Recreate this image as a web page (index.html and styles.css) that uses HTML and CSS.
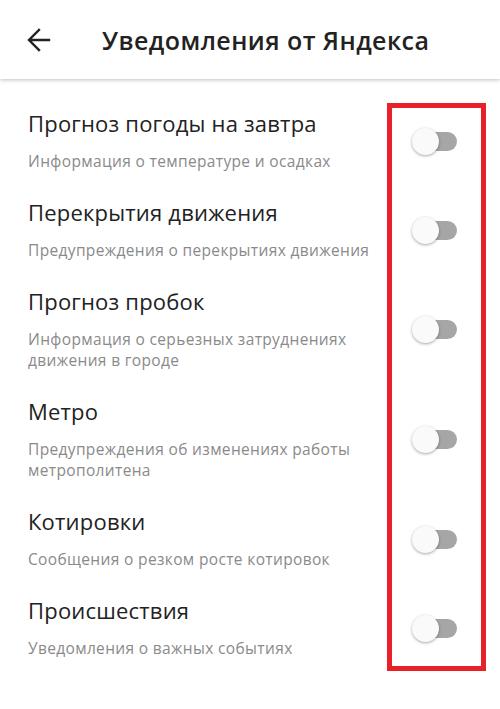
FILE: index.html
```html
<!DOCTYPE html>
<html lang="ru">
<head>
<meta charset="utf-8">
<title>Уведомления от Яндекса</title>
<link rel="stylesheet" href="styles.css">
</head>
<body>
<header class="appbar">
  <svg class="back" width="24" height="24" viewBox="0 0 24 24" aria-hidden="true">
    <path d="M22 12H3M12 2L2 12l10 10" fill="none" stroke="#222" stroke-width="2.4" stroke-linecap="square"/>
  </svg>
  <h1 class="title">Уведомления от Яндекса</h1>
</header>
<main class="list">
  <div class="row">
    <div class="text"><div class="name">Прогноз погоды на завтра</div><div class="desc">Информация о температуре и осадках</div></div>
    <span class="switch"><span class="track"></span><span class="knob"></span></span>
  </div>
  <div class="row">
    <div class="text"><div class="name">Перекрытия движения</div><div class="desc">Предупреждения о перекрытиях движения</div></div>
    <span class="switch"><span class="track"></span><span class="knob"></span></span>
  </div>
  <div class="row">
    <div class="text"><div class="name">Прогноз пробок</div><div class="desc">Информация о серьезных затруднениях движения в городе</div></div>
    <span class="switch"><span class="track"></span><span class="knob"></span></span>
  </div>
  <div class="row">
    <div class="text"><div class="name">Метро</div><div class="desc">Предупреждения об изменениях работы метрополитена</div></div>
    <span class="switch"><span class="track"></span><span class="knob"></span></span>
  </div>
  <div class="row">
    <div class="text"><div class="name">Котировки</div><div class="desc">Сообщения о резком росте котировок</div></div>
    <span class="switch"><span class="track"></span><span class="knob"></span></span>
  </div>
  <div class="row">
    <div class="text"><div class="name">Происшествия</div><div class="desc">Уведомления о важных событиях</div></div>
    <span class="switch"><span class="track"></span><span class="knob"></span></span>
  </div>
  <div class="highlight"></div>
</main>
</body>
</html>
```
FILE: styles.css
```css
html, body {
  margin: 0;
  padding: 0;
  background: #fff;
  font-family: "Open Sans", Roboto, "Noto Sans", sans-serif;
}
.appbar {
  height: 79px;
  display: flex;
  align-items: center;
  padding-left: 27px;
  box-shadow: 0 1px 4px rgba(0,0,0,0.25);
  position: relative;
  z-index: 1;
}
.back {
  flex: none;
}
.title {
  margin: 0 0 0 51px;
  font-size: 25px;
  letter-spacing: 0.45px;
  font-weight: 600;
  color: #222;
}
.list {
  position: relative;
  padding-top: 30px;
}
.row {
  display: flex;
  align-items: center;
  padding: 0 43px 26px 28px;
}
.text {
  flex: 1;
  padding-right: 30px;
}
.name {
  font-size: 22px;
  letter-spacing: 0.2px;
  line-height: 28px;
  color: #222;
}
.desc {
  margin-top: 14px;
  font-size: 15.5px;
  letter-spacing: 0.35px;
  line-height: 21px;
  color: #8a8a8a;
}
.switch {
  position: relative;
  flex: none;
  width: 45px;
  height: 27px;
  margin-top: 1px;
}
.track {
  position: absolute;
  right: 0;
  top: 4px;
  width: 38px;
  height: 19px;
  border-radius: 10px;
  background: #a6a6a6;
}
.knob {
  position: absolute;
  left: 0;
  top: 0;
  width: 27px;
  height: 27px;
  border-radius: 50%;
  background: #fafafa;
  box-shadow: 0 1px 3px rgba(0,0,0,0.35);
}
.highlight {
  position: absolute;
  left: 387px;
  top: 24px;
  width: 89px;
  height: 558px;
  border: 5px solid #e8202a;
}
```
